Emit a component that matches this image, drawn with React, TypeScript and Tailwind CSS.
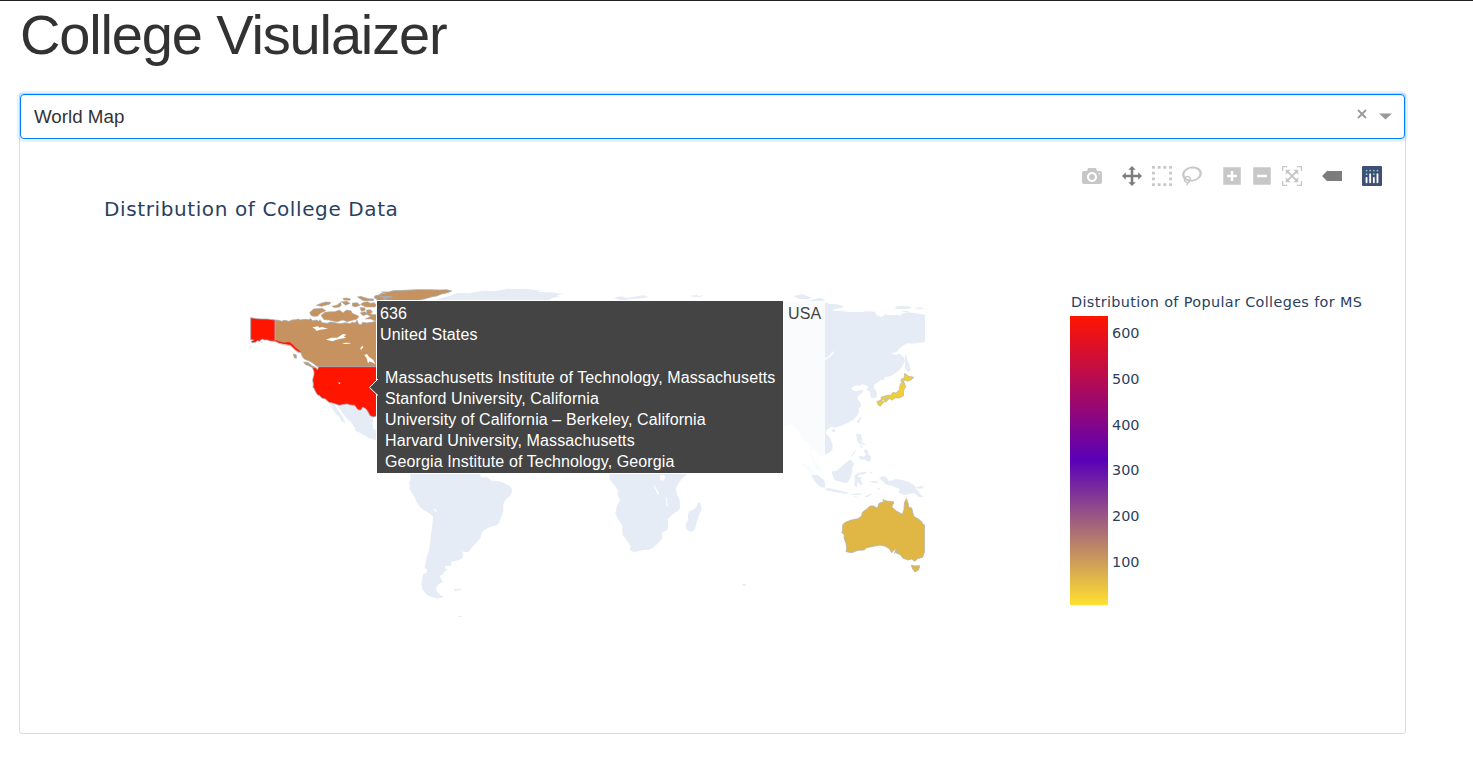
import React from "react";

const LAND = "#e5ecf6";
const CANADA = "#c69260";

type ModeIcon = { path: string; w: number; active?: boolean; gap?: boolean };

const modeIcons: ModeIcon[] = [
  { w: 1000, path: "m500 450c-83 0-150-67-150-150 0-83 67-150 150-150 83 0 150 67 150 150 0 83-67 150-150 150z m400 150h-120c-16 0-34 13-39 29l-31 93c-6 15-23 28-40 28h-340c-16 0-34-13-39-28l-31-94c-6-15-23-28-40-28h-120c-55 0-100-45-100-100v-450c0-55 45-100 100-100h800c55 0 100 45 100 100v450c0 55-45 100-100 100z m-400-550c-138 0-250 112-250 250 0 138 112 250 250 250 138 0 250-112 250-250 0-138-112-250-250-250z m365 380c-19 0-35 16-35 35 0 19 16 35 35 35 19 0 35-16 35-35 0-19-16-35-35-35z" },
  { w: 1000, gap: true, active: true, path: "m1000 350l-187 188 0-125-250 0 0 250 125 0-188 187-187-187 125 0 0-250-250 0 0 125-188-188 186-187 0 125 252 0 0-250-125 0 187-188 188 188-125 0 0 250 250 0 0-126 187 188z" },
  { w: 1000, path: "m0 850l0-143 143 0 0 143-143 0z m286 0l0-143 143 0 0 143-143 0z m285 0l0-143 143 0 0 143-143 0z m286 0l0-143 143 0 0 143-143 0z m-857-286l0-143 143 0 0 143-143 0z m857 0l0-143 143 0 0 143-143 0z m-857-285l0-143 143 0 0 143-143 0z m857 0l0-143 143 0 0 143-143 0z m-857-286l0-143 143 0 0 143-143 0z m286 0l0-143 143 0 0 143-143 0z m285 0l0-143 143 0 0 143-143 0z m286 0l0-143 143 0 0 143-143 0z" },
  { w: 1031, path: "m1018 538c-36 207-290 336-568 286-277-48-473-256-436-463 10-57 36-108 76-151-13-66 11-137 68-183 34-28 75-41 114-42l-55-70 0 0c-2-1-3-2-4-3-10-14-8-34 5-45 14-11 34-8 45 4 1 1 2 3 2 5l0 0 113 140c16 11 31 24 45 40 4 3 6 7 8 11 48-3 100 0 151 9 278 48 473 255 436 462z m-624-379c-80 14-149 48-197 96 42 42 109 47 156 9 33-26 47-66 41-105z m-187-74c-19 16-33 37-39 60 50-32 109-55 174-68-42-25-95-24-135 8z m360 75c-34-7-69-9-102-8 8 62-16 128-68 170-73 59-175 54-244-5-9 20-16 40-20 61-28 159 121 317 333 354s407-60 434-217c28-159-121-318-333-355z" },
  { w: 875, gap: true, path: "m1 787l0-875 875 0 0 875-875 0z m687-500l-187 0 0-187-125 0 0 187-188 0 0 125 188 0 0 187 125 0 0-187 187 0 0-125z" },
  { w: 875, path: "m0 788l0-876 876 0 0 876-876 0z m688-500l-500 0 0 125 500 0 0-125z" },
  { w: 1000, path: "m250 850l-187 0-63 0 0-62 0-188 63 0 0 188 187 0 0 62z m688 0l-188 0 0-62 188 0 0-188 62 0 0 188 0 62-62 0z m-875-938l0 188-63 0 0-188 0-62 63 0 187 0 0 62-187 0z m875 188l0-188-188 0 0-62 188 0 62 0 0 62 0 188-62 0z m-125 188l-1 0-93-94-156 156 156 156 92-93 2 0 0 250-250 0 0-2 93-92-156-156-156 156 94 92 0 2-250 0 0-250 0 0 93 93 157-156-157-156-93 94 0 0 0-250 250 0 0 0-94 93 156 157 156-157-93-93 0 0 250 0 0 250z" },
  { w: 1500, gap: true, active: true, path: "m375 725l0 0-375-375 375-374 0-1 1125 0 0 750-1125 0z" },
];

function ModeBar() {
  return (
    <div className="flex h-5 justify-end pr-[23px]">
      {modeIcons.map((icon, i) => (
        <svg
          key={i}
          className={icon.gap ? "ml-5 h-5 w-5" : "ml-2.5 h-5 w-5"}
          viewBox={`0 0 ${icon.w} 1000`}
          fill={icon.active ? "#7c7c7c" : "#c7c7c7"}
        >
          <path transform="matrix(1 0 0 -1 0 850)" d={icon.path} />
        </svg>
      ))}
      <svg className="ml-5 h-5 w-5" viewBox="0 0 132 132">
        <rect width="132" height="132" rx="6" fill="#3f4f75" />
        <g fill="#80cfbe">
          <circle cx="78" cy="54" r="6" />
          <circle cx="102" cy="30" r="6" />
          <circle cx="78" cy="30" r="6" />
          <circle cx="54" cy="30" r="6" />
          <circle cx="30" cy="30" r="6" />
          <circle cx="30" cy="54" r="6" />
        </g>
        <g fill="#fff">
          <rect x="24" y="72" width="12" height="42" rx="6" />
          <rect x="48" y="48" width="12" height="66" rx="6" />
          <rect x="72" y="72" width="12" height="42" rx="6" />
          <rect x="96" y="48" width="12" height="66" rx="6" />
        </g>
      </svg>
    </div>
  );
}

function WorldMap() {
  return (
    <svg className="h-[350px] w-[675px] shrink-0" viewBox="250 280 675 350">
      {/* North America */}
      <g transform="translate(240 280) scale(.33333)">
        <path fill={LAND} d="M266 366L280 368 344 373 368 382 400 409 400 418 397 433 400 446 410 452 410 480 398 478 385 473 360 458 346 452 343 440 334 428 322 417 310 402 300 388 290 375 283 372 290 385 300 400 308 411 312 420 317 431 305 424 299 412 288 403 284 395 277 387 272 376Z" />
        <g stroke="#aaaeb3" strokeWidth="2.4" strokeLinejoin="round">
          <path fill={CANADA} d="M105 120L116 121 125 124 133 121 147 124 156 120 168 119 175 117 181 120 193 118 206 119 212 116 218 122 230 120 236 124 240 119 246 128 262 130 272 126 285 128 300 131 318 128 330 131 337 127 345 129 351 121 356 133 364 134 368 127 380 129 400 126 420 120 420 260 232 260 226 255 218 249 206 242 194 238 187 230 184 221 178 214 168 207 160 197 148 189 132 190 118 187 105 184Z" />
          <path fill={CANADA} d="M191 246L204 248 216 257 228 264 231 269 220 264 204 256 197 254ZM160 222L169 225 169 235 163 233Z" />
          <path fill="#ff1500" d="M32 113L50 116 66 117 82 117 105 120 105 184 90 183 82 180 72 180 67 177 62 180 60 184 52 182 46 187 36 188 34 184 41 180 32 179Z" />
          <path fill="#ff1500" d="M217 262L229 264 232 270 236 260 420 260 420 405 400 411 390 407 385 397 378 387 368 381 363 390 356 390 351 386 344 376 330 375 322 372 312 373 298 376 280 370 267 367 256 357 245 354 239 347 232 344 226 334 222 325 219 322 220 312 218 300 220 291 222 284 222 275Z" />
          <path strokeWidth="1.8" fill={CANADA} d="M229 76L243 70 257 66 272 67 270 72 257 76 244 79ZM276 79L292 75 302 66 304 76 298 81 284 83ZM209 98L220 87 246 85 258 92 242 99 232 109 220 109 213 106ZM243 106L254 97 270 95 284 95 298 90 309 98 320 90 333 92 337 100 347 104 357 109 350 118 337 121 322 125 309 120 292 125 278 123 267 120 252 119ZM309 55L320 54 332 57 329 61 311 60ZM304 65L321 64 330 70 317 76ZM337 69L352 68 360 76 346 81 337 78ZM352 51L362 49 375 53 387 56 401 57 400 62 370 62ZM361 73L371 67 384 65 390 70 403 68 410 76 404 81 378 81ZM360 83L374 83 376 91 364 94ZM361 98L375 95 383 102 369 107ZM380 90L391 89 398 96 390 101 401 104 410 103 420 118 405 123 392 117 376 117 392 109 380 103Z" />
          <path fill={CANADA} d="M404 48L425 43 420 41 438 40 425 36 445 36 460 32 493 31 532 29 570 29 600 30 620 29 635 33 623 38 605 42 590 48 573 51 556 56 532 62 515 70 410 70 410 56 404 55Z" />
        </g>
        <path fill="#ff1500" stroke="#ff1500" strokeWidth="1.5" d="M105 181L118 185 132 189 148 187 158 194 168 205 180 214 178 217 168 210 158 201 150 194 140 193 130 191 117 188Z" />
        <path fill="none" stroke="#aaaeb3" strokeWidth="2" d="M105 185L117 190 130 194 140 196 150 197 158 203 168 213 178 219" />
        <path fill="#fff" d="M217 142L235 139 237 143 247 141 253 143 264 145 253 148 240 149 230 153 226 148ZM258 179L274 173 291 173 300 168 309 162 320 164 311 169 318 173 303 176 289 179 278 184ZM306 192L316 188 330 188 333 190 320 192ZM373 225L381 222 387 230 400 240 406 252 401 250 389 244 384 250 380 235ZM361 204L368 197 370 201 363 210ZM295 307L301 308 300 312 296 311Z" />
        <path fill="#aaa" d="M420 48h32l9 4-17 3-9 6h-8l6-8-15-1z" />
        <path fill="#c9c9c9" d="M30 199l3 0 1 4-3 0zM61 185l7 0 0 3-6 0z" />
      </g>
      {/* Arctic coast */}
      <g transform="translate(380 284) scale(.33333)" fill={LAND}>
        <path d="M155 50L183 43 210 35 233 26 265 28 310 20 350 21 380 14 450 16 485 20 470 24 511 25 548 29 530 34 539 37 517 42 500 55ZM700 42L725 37 740 42 790 34 808 39 785 43 757 45 725 49ZM933 35L955 33 950 37 972 34 959 39 941 40ZM1240 37L1267 30 1295 41 1288 45 1260 45ZM1295 46L1325 43 1335 49 1315 53Z" />
      </g>
      {/* South America */}
      <g transform="translate(400 465) scale(.33333)" fill={LAND}>
        <path d="M30 20L238 20 243 37 263 37 274 47 295 48 310 53 325 60 335 69 336 80 330 93 318 103 310 116 310 138 304 156 298 172 290 181 270 186 253 194 245 205 242 218 228 235 216 247 207 260 192 262 185 258 190 271 187 280 175 286 154 290 154 302 135 303 136 312 144 314 134 319 129 328 119 333 124 345 129 350 116 358 108 369 111 380 122 391 132 396 113 401 98 397 84 392 75 383 67 372 64 356 67 342 70 327 80 323 81 313 74 310 79 278 88 253 92 214 97 182 99 154 90 146 75 137 62 129 51 113 40 90 28 71 30 61 26 57 32 43Z" />
        <path d="M160 373l22-2 1 4-18 3zM173 453l12 0 1 3-11 0zM98 383l12 8-12 0-9-4z" />
        <path fill="#fff" d="M101 131l7 3 4 7-8-3z" />
      </g>
      {/* Africa */}
      <g transform="translate(600 465) scale(.33333)">
        <path fill={LAND} d="M30 20L270 20 247 39 234 57 228 71 232 90 239 106 240 128 235 137 218 148 203 162 205 184 201 195 186 202 187 219 180 229 161 247 148 254 130 255 117 258 101 261 90 255 91 244 83 230 68 209 66 181 55 164 46 144 51 123 60 106 54 94 53 75 43 60 28 42ZM293 116L298 110 304 124 303 137 296 152 286 188 280 198 269 200 259 192 257 177 265 164 263 149 268 139 280 134 291 124ZM426 357L438 356 439 361 430 363ZM300 120l6 12-1 4-6-5z" />
        <path fill="#fff" d="M180 31L194 31 196 39 190 47 181 45ZM162 54L165 65 173 77 177 87 172 88 168 76 163 68ZM196 93L201 101 203 125 199 124 199 109Z" />
      </g>
      {/* Eastern Asia */}
      <g transform="translate(775 280) scale(.33333)">
        <path fill={LAND} d="M0 66L75 65 110 60 132 54 149 66 163 72 184 73 205 78 203 83 178 87 176 93 200 92 222 97 239 95 254 97 273 94 300 95 303 104 317 111 326 108 330 103 345 106 367 104 378 107 380 101 400 97 420 99 450 104 450 187 430 188 412 191 397 190 386 196 374 205 363 217 348 220 361 224 373 221 386 231 390 244 381 260 367 275 352 286 339 290 329 290 328 299 317 300 309 307 299 312 296 324 305 334 306 350 300 354 288 355 285 341 284 334 275 332 275 326 281 320 264 313 253 318 246 315 235 320 228 327 238 332 246 334 256 330 266 332 261 339 247 350 248 359 256 367 258 378 251 386 252 397 244 410 230 422 216 430 197 438 178 443 169 440 156 449 152 459 165 474 173 493 172 510 160 520 149 524 137 531 129 519 115 507 111 520 116 536 126 551 134 560 140 580 125 570 117 556 109 539 108 520 103 502 101 488 85 480 78 475 75 462 63 445 52 432 24 440 0 440ZM393 222L397 239 402 251 407 270 398 276 389 262 391 245 389 231ZM360 80L380 77 403 79 410 84 392 87 363 86ZM420 83L440 82 449 86 428 87ZM379 94L395 93 406 96 386 97ZM255 410L259 412 251 431 246 426Z" />
        <path fill="#fff" d="M137 245L150 235 162 229 170 219 178 212 175 222 164 232 152 239Z" />
        <g fill="#efce36" stroke="#b4b5ab" strokeWidth="2">
          <path d="M389 280L401 289 417 292 408 300 398 304 390 300 384 307 377 303 380 296 388 294ZM378 309L387 306 392 320 386 331 385 348 372 354 360 354 350 361 345 356 332 355 317 362 319 352 336 346 347 346 354 337 363 339 374 329 374 319ZM306 364L319 361 326 367 316 379 309 374ZM328 358L341 357 334 365 326 366Z" />
        </g>
      </g>
      {/* South-East Asia and Oceania */}
      <g transform="translate(775 420) scale(.33333)">
        <path fill={LAND} d="M79 128L96 133 114 153 132 168 147 180 151 192 149 204 137 201 120 186 109 165 94 148ZM149 206L165 205 190 211 212 216 225 219 208 221 180 216 153 211ZM170 154L184 153 207 133 220 122 228 119 237 132 232 141 231 158 225 176 215 190 201 187 179 181 173 166ZM239 166L249 159 277 155 270 162 252 164 248 172 262 170 256 177 264 194 255 194 248 184 245 203 238 195 239 179ZM286 157L292 153 290 163ZM283 184L303 183 312 188 292 188ZM243 43L257 42 261 56 260 67 274 75 263 74 249 69 246 57ZM252 73L263 80 260 86ZM266 90L275 88 281 96 273 105ZM250 109L262 109 268 118 257 119ZM261 113L280 100 288 112 286 126 276 123ZM228 109l13-18 2 2-13 17zM224 222L250 220 265 221 252 225 229 224ZM239 228L251 232 238 231ZM268 230L286 221 292 222 276 232ZM312 174L325 168 336 173 340 183 355 181 360 177 383 180 404 187 419 197 424 206 436 222 447 232 431 230 417 219 403 221 393 226 370 219 374 207 351 197 332 193 325 185ZM422 202L440 198 448 204 430 206ZM169 29L180 27 181 34 174 37ZM305 207l10-3-4 7z" />
        <g fill="#e0b744" stroke="#b6b5ac" strokeWidth="2.5" strokeLinejoin="round">
          <path d="M203 315L209 308 226 301 249 296 260 288 262 277 274 268 286 258 296 258 307 265 312 250 326 245 324 239 335 243 357 246 350 261 364 273 382 283 387 269 388 249 394 236 400 252 400 261 410 264 416 289 430 297 440 305 443 312 449 315 449 394 443 412 427 416 420 424 409 417 400 420 384 415 376 404 364 399 366 389 362 397 359 400 363 385 350 398 343 386 331 379 315 375 295 379 275 383 268 390 249 391 230 398 213 395 215 386 213 370 207 353 208 345 203 340 200 338 202 334 203 326Z" />
          <path d="M409 436L420 438 434 437 431 449 420 456 413 447Z" />
        </g>
      </g>
    </svg>
  );
}

function ColorBar() {
  return (
    <div className="w-[310px] font-['DejaVu_Sans','Verdana',sans-serif] text-[14.4px] text-[#2a3f5f]">
      <div className="h-5 whitespace-nowrap pl-px leading-5 tracking-[0.36px]">Distribution of Popular Colleges for MS</div>
      <div className="mt-[4px] flex gap-[4px]">
        <div className="h-[289px] w-[38px] bg-[linear-gradient(to_bottom,#ff1500_0%,#5a00b8_50%,#ffe030_100%)]" />
        <div className="flex flex-col gap-[25.8px] pt-[7px] leading-5">
          {[600, 500, 400, 300, 200, 100].map((n) => (
            <span key={n}>{n}</span>
          ))}
        </div>
      </div>
    </div>
  );
}

function HoverLabel() {
  const rows = [
    "Massachusetts Institute of Technology, Massachusetts",
    "Stanford University, California",
    "University of California – Berkeley, California",
    "Harvard University, Massachusetts",
    "Georgia Institute of Technology, Georgia",
  ];
  return (
    <div className="absolute left-[126px] top-[20px] flex text-[16px] leading-[21px] tracking-[0.115px] text-white">
      <div className="relative h-[174px] w-[408px] border border-white bg-[#444] pl-[3px] pt-[2px]">
        <svg className="absolute -left-[9px] top-[77px] h-[18px] w-[10px]" viewBox="0 0 10 18">
          <path d="M10 1L1.5 9.500 10 17.500" fill="#444" stroke="#fff" />
        </svg>
        <div>636</div>
        <div>United States</div>
        <div className="mt-[22px] whitespace-nowrap pl-[5px]">
          {rows.map((r) => (
            <div key={r}>{r}</div>
          ))}
        </div>
      </div>
      <div className="-ml-px mt-px h-[174px] w-[42px] bg-white/80 pl-[5px] pt-[2px] text-[#444]">USA</div>
    </div>
  );
}

export default function App() {
  return (
    <div className="h-[763px] overflow-hidden border-t border-[#222] bg-white pl-[19px] font-['Liberation_Sans',Arial,sans-serif]">
      <h1 className="h-[92px] pl-px text-[56px] leading-[67px] tracking-[-1.15px] text-[#323232]">College Visulaizer</h1>
      <div className="h-[641px] w-[1387px] rounded-[3px] border border-[#dcdcdc]">
        <div className="flex h-[45px] items-center rounded-[4px] border border-[#007eff] bg-white pl-[13px] pr-[12px] text-[18.75px] text-[#333] shadow-[inset_0_1px_1px_rgba(0,0,0,0.075),0_0_0_3px_rgba(0,126,255,0.1)]">
          <span className="flex-1 pt-px">World Map</span>
          <svg className="mb-[5px] h-[10px] w-[10px]" viewBox="0 0 10 10">
            <path d="M1 1L9 9M9 1L1 9" stroke="#999" strokeWidth="1.8" />
          </svg>
          <svg className="ml-3 h-[7px] w-[13px]" viewBox="0 0 13 7">
            <path d="M0 0.500H13L6.500 6.500Z" fill="#999" />
          </svg>
        </div>
        <div className="pt-[27px]">
          <ModeBar />
          <h2 className="h-[94px] pl-[84px] pt-[11px] font-['DejaVu_Sans','Verdana',sans-serif] text-[20px] leading-[24px] tracking-[0.61px] text-[#2a3f5f]">
            Distribution of College Data
          </h2>
          <div className="relative ml-[230px] flex">
            <WorldMap />
            <div className="ml-[145px] pt-[12px]">
              <ColorBar />
            </div>
            <HoverLabel />
          </div>
        </div>
      </div>
    </div>
  );
}
